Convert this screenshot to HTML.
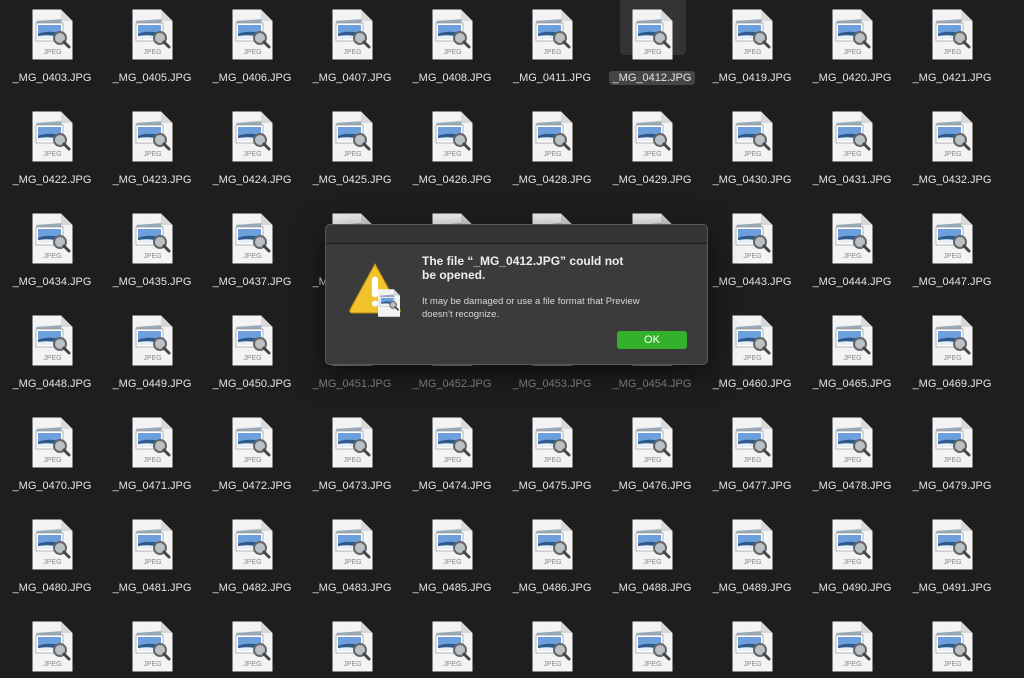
<!DOCTYPE html>
<html><head><meta charset="utf-8"><style>
html,body{margin:0;width:1024px;height:678px;overflow:hidden}
body{background:#1e1e1e;font-family:"Liberation Sans",sans-serif;position:relative}
.c{position:absolute;width:100px;height:102px}
.lr{height:66px}
.c svg{position:absolute;left:32px;top:9px}
.j{position:absolute;left:32px;width:41px;top:49px;text-align:center;font-size:7px;color:#8a8a8a}
.l{position:absolute;left:0;width:104px;top:72px;text-align:center;font-size:11px;color:#e4e4e4;white-space:nowrap}
.d .l{color:#8a8a8a}
.sel .bg{position:absolute;left:20px;top:-5px;width:66px;height:60px;background:#333;border-radius:4px}
.sel .l span{background:#454545;padding:1px 4px;border-radius:3px}
#dlg{position:absolute;left:325px;top:224px;width:381px;height:139px;background:#3b3b3b;border:1px solid #5a5a5a;border-radius:5px;box-shadow:0 8px 30px rgba(0,0,0,.6);overflow:hidden}
#dlg .tb{height:18px;background:#353535;border-bottom:1px solid #1a1a1a}
#dlg .t{position:absolute;left:96px;top:29px;font-size:12px;font-weight:bold;color:#eee;line-height:14px;width:208px}
#dlg .b{position:absolute;left:96px;top:70px;font-size:9.5px;color:#d8d8d8;line-height:13px;width:240px}
#dlg .ok{position:absolute;left:291px;top:106px;width:70px;height:18px;background:#34b12c;border-radius:3px;color:#fff;font-size:11px;text-align:center;line-height:18px}
</style></head><body>
<svg width="0" height="0" style="position:absolute"><defs>
<symbol id="ic" viewBox="0 0 41 51">
<path d="M0.5 0.5H29L40.5 12V50.5H0.5Z" fill="#f3f3f3"/>
<path d="M29 0.5V12H40.5Z" fill="#d8d8d8"/>
<rect x="5" y="11" width="25" height="18" fill="#9ab" transform="rotate(-4 17 20)"/>
<rect x="4" y="14" width="27" height="18" fill="#fff" stroke="#888" stroke-width=".6"/>
<rect x="6" y="16" width="23" height="14" fill="#6d9fdc"/>
<path d="M6 25Q14 21 29 24V30H6Z" fill="#2d5a8a"/>
<path d="M6 27Q16 25 29 28V30H6Z" fill="#e8eef5"/>
<circle cx="28" cy="29" r="6" fill="#b9c0c6" stroke="#666" stroke-width="2"/>
<path d="M32 33L37 38" stroke="#444" stroke-width="3" stroke-linecap="round"/>
</symbol>
<symbol id="warn" viewBox="0 0 52 52">
<path d="M26 2L50 46Q51 49 47 49H5Q1 49 2 46Z" fill="#f2c22a" stroke="#c99a10" stroke-width="1"/>
<rect x="23" y="14" width="6" height="20" rx="3" fill="#fff"/>
<circle cx="26" cy="40" r="3" fill="#fff"/>
</symbol>
</defs></svg>

<div class="c" style="left:0;top:0"><svg width="41" height="51"><use href="#ic"/></svg><div class="j">JPEG</div><div class="l">_MG_0403.JPG</div></div>
<div class="c" style="left:100px;top:0"><svg width="41" height="51"><use href="#ic"/></svg><div class="j">JPEG</div><div class="l">_MG_0405.JPG</div></div>
<div class="c" style="left:200px;top:0"><svg width="41" height="51"><use href="#ic"/></svg><div class="j">JPEG</div><div class="l">_MG_0406.JPG</div></div>
<div class="c" style="left:300px;top:0"><svg width="41" height="51"><use href="#ic"/></svg><div class="j">JPEG</div><div class="l">_MG_0407.JPG</div></div>
<div class="c" style="left:400px;top:0"><svg width="41" height="51"><use href="#ic"/></svg><div class="j">JPEG</div><div class="l">_MG_0408.JPG</div></div>
<div class="c" style="left:500px;top:0"><svg width="41" height="51"><use href="#ic"/></svg><div class="j">JPEG</div><div class="l">_MG_0411.JPG</div></div>
<div class="c sel" style="left:600px;top:0"><div class="bg"></div><svg width="41" height="51"><use href="#ic"/></svg><div class="j">JPEG</div><div class="l"><span>_MG_0412.JPG</span></div></div>
<div class="c" style="left:700px;top:0"><svg width="41" height="51"><use href="#ic"/></svg><div class="j">JPEG</div><div class="l">_MG_0419.JPG</div></div>
<div class="c" style="left:800px;top:0"><svg width="41" height="51"><use href="#ic"/></svg><div class="j">JPEG</div><div class="l">_MG_0420.JPG</div></div>
<div class="c" style="left:900px;top:0"><svg width="41" height="51"><use href="#ic"/></svg><div class="j">JPEG</div><div class="l">_MG_0421.JPG</div></div>

<div class="c" style="left:0;top:102px"><svg width="41" height="51"><use href="#ic"/></svg><div class="j">JPEG</div><div class="l">_MG_0422.JPG</div></div>
<div class="c" style="left:100px;top:102px"><svg width="41" height="51"><use href="#ic"/></svg><div class="j">JPEG</div><div class="l">_MG_0423.JPG</div></div>
<div class="c" style="left:200px;top:102px"><svg width="41" height="51"><use href="#ic"/></svg><div class="j">JPEG</div><div class="l">_MG_0424.JPG</div></div>
<div class="c" style="left:300px;top:102px"><svg width="41" height="51"><use href="#ic"/></svg><div class="j">JPEG</div><div class="l">_MG_0425.JPG</div></div>
<div class="c" style="left:400px;top:102px"><svg width="41" height="51"><use href="#ic"/></svg><div class="j">JPEG</div><div class="l">_MG_0426.JPG</div></div>
<div class="c" style="left:500px;top:102px"><svg width="41" height="51"><use href="#ic"/></svg><div class="j">JPEG</div><div class="l">_MG_0428.JPG</div></div>
<div class="c" style="left:600px;top:102px"><svg width="41" height="51"><use href="#ic"/></svg><div class="j">JPEG</div><div class="l">_MG_0429.JPG</div></div>
<div class="c" style="left:700px;top:102px"><svg width="41" height="51"><use href="#ic"/></svg><div class="j">JPEG</div><div class="l">_MG_0430.JPG</div></div>
<div class="c" style="left:800px;top:102px"><svg width="41" height="51"><use href="#ic"/></svg><div class="j">JPEG</div><div class="l">_MG_0431.JPG</div></div>
<div class="c" style="left:900px;top:102px"><svg width="41" height="51"><use href="#ic"/></svg><div class="j">JPEG</div><div class="l">_MG_0432.JPG</div></div>

<div class="c" style="left:0;top:204px"><svg width="41" height="51"><use href="#ic"/></svg><div class="j">JPEG</div><div class="l">_MG_0434.JPG</div></div>
<div class="c" style="left:100px;top:204px"><svg width="41" height="51"><use href="#ic"/></svg><div class="j">JPEG</div><div class="l">_MG_0435.JPG</div></div>
<div class="c" style="left:200px;top:204px"><svg width="41" height="51"><use href="#ic"/></svg><div class="j">JPEG</div><div class="l">_MG_0437.JPG</div></div>
<div class="c" style="left:300px;top:204px"><svg width="41" height="51"><use href="#ic"/></svg><div class="j">JPEG</div><div class="l">_MG_0438.JPG</div></div>
<div class="c" style="left:400px;top:204px"><svg width="41" height="51"><use href="#ic"/></svg><div class="j">JPEG</div><div class="l">_MG_0439.JPG</div></div>
<div class="c" style="left:500px;top:204px"><svg width="41" height="51"><use href="#ic"/></svg><div class="j">JPEG</div><div class="l">_MG_0440.JPG</div></div>
<div class="c" style="left:600px;top:204px"><svg width="41" height="51"><use href="#ic"/></svg><div class="j">JPEG</div><div class="l">_MG_0441.JPG</div></div>
<div class="c" style="left:700px;top:204px"><svg width="41" height="51"><use href="#ic"/></svg><div class="j">JPEG</div><div class="l">_MG_0443.JPG</div></div>
<div class="c" style="left:800px;top:204px"><svg width="41" height="51"><use href="#ic"/></svg><div class="j">JPEG</div><div class="l">_MG_0444.JPG</div></div>
<div class="c" style="left:900px;top:204px"><svg width="41" height="51"><use href="#ic"/></svg><div class="j">JPEG</div><div class="l">_MG_0447.JPG</div></div>

<div class="c" style="left:0;top:306px"><svg width="41" height="51"><use href="#ic"/></svg><div class="j">JPEG</div><div class="l">_MG_0448.JPG</div></div>
<div class="c" style="left:100px;top:306px"><svg width="41" height="51"><use href="#ic"/></svg><div class="j">JPEG</div><div class="l">_MG_0449.JPG</div></div>
<div class="c" style="left:200px;top:306px"><svg width="41" height="51"><use href="#ic"/></svg><div class="j">JPEG</div><div class="l">_MG_0450.JPG</div></div>
<div class="c d" style="left:300px;top:306px"><svg width="41" height="51"><use href="#ic"/></svg><div class="j">JPEG</div><div class="l">_MG_0451.JPG</div></div>
<div class="c d" style="left:400px;top:306px"><svg width="41" height="51"><use href="#ic"/></svg><div class="j">JPEG</div><div class="l">_MG_0452.JPG</div></div>
<div class="c d" style="left:500px;top:306px"><svg width="41" height="51"><use href="#ic"/></svg><div class="j">JPEG</div><div class="l">_MG_0453.JPG</div></div>
<div class="c d" style="left:600px;top:306px"><svg width="41" height="51"><use href="#ic"/></svg><div class="j">JPEG</div><div class="l">_MG_0454.JPG</div></div>
<div class="c" style="left:700px;top:306px"><svg width="41" height="51"><use href="#ic"/></svg><div class="j">JPEG</div><div class="l">_MG_0460.JPG</div></div>
<div class="c" style="left:800px;top:306px"><svg width="41" height="51"><use href="#ic"/></svg><div class="j">JPEG</div><div class="l">_MG_0465.JPG</div></div>
<div class="c" style="left:900px;top:306px"><svg width="41" height="51"><use href="#ic"/></svg><div class="j">JPEG</div><div class="l">_MG_0469.JPG</div></div>

<div class="c" style="left:0;top:408px"><svg width="41" height="51"><use href="#ic"/></svg><div class="j">JPEG</div><div class="l">_MG_0470.JPG</div></div>
<div class="c" style="left:100px;top:408px"><svg width="41" height="51"><use href="#ic"/></svg><div class="j">JPEG</div><div class="l">_MG_0471.JPG</div></div>
<div class="c" style="left:200px;top:408px"><svg width="41" height="51"><use href="#ic"/></svg><div class="j">JPEG</div><div class="l">_MG_0472.JPG</div></div>
<div class="c" style="left:300px;top:408px"><svg width="41" height="51"><use href="#ic"/></svg><div class="j">JPEG</div><div class="l">_MG_0473.JPG</div></div>
<div class="c" style="left:400px;top:408px"><svg width="41" height="51"><use href="#ic"/></svg><div class="j">JPEG</div><div class="l">_MG_0474.JPG</div></div>
<div class="c" style="left:500px;top:408px"><svg width="41" height="51"><use href="#ic"/></svg><div class="j">JPEG</div><div class="l">_MG_0475.JPG</div></div>
<div class="c" style="left:600px;top:408px"><svg width="41" height="51"><use href="#ic"/></svg><div class="j">JPEG</div><div class="l">_MG_0476.JPG</div></div>
<div class="c" style="left:700px;top:408px"><svg width="41" height="51"><use href="#ic"/></svg><div class="j">JPEG</div><div class="l">_MG_0477.JPG</div></div>
<div class="c" style="left:800px;top:408px"><svg width="41" height="51"><use href="#ic"/></svg><div class="j">JPEG</div><div class="l">_MG_0478.JPG</div></div>
<div class="c" style="left:900px;top:408px"><svg width="41" height="51"><use href="#ic"/></svg><div class="j">JPEG</div><div class="l">_MG_0479.JPG</div></div>

<div class="c" style="left:0;top:510px"><svg width="41" height="51"><use href="#ic"/></svg><div class="j">JPEG</div><div class="l">_MG_0480.JPG</div></div>
<div class="c" style="left:100px;top:510px"><svg width="41" height="51"><use href="#ic"/></svg><div class="j">JPEG</div><div class="l">_MG_0481.JPG</div></div>
<div class="c" style="left:200px;top:510px"><svg width="41" height="51"><use href="#ic"/></svg><div class="j">JPEG</div><div class="l">_MG_0482.JPG</div></div>
<div class="c" style="left:300px;top:510px"><svg width="41" height="51"><use href="#ic"/></svg><div class="j">JPEG</div><div class="l">_MG_0483.JPG</div></div>
<div class="c" style="left:400px;top:510px"><svg width="41" height="51"><use href="#ic"/></svg><div class="j">JPEG</div><div class="l">_MG_0485.JPG</div></div>
<div class="c" style="left:500px;top:510px"><svg width="41" height="51"><use href="#ic"/></svg><div class="j">JPEG</div><div class="l">_MG_0486.JPG</div></div>
<div class="c" style="left:600px;top:510px"><svg width="41" height="51"><use href="#ic"/></svg><div class="j">JPEG</div><div class="l">_MG_0488.JPG</div></div>
<div class="c" style="left:700px;top:510px"><svg width="41" height="51"><use href="#ic"/></svg><div class="j">JPEG</div><div class="l">_MG_0489.JPG</div></div>
<div class="c" style="left:800px;top:510px"><svg width="41" height="51"><use href="#ic"/></svg><div class="j">JPEG</div><div class="l">_MG_0490.JPG</div></div>
<div class="c" style="left:900px;top:510px"><svg width="41" height="51"><use href="#ic"/></svg><div class="j">JPEG</div><div class="l">_MG_0491.JPG</div></div>

<div class="c lr" style="left:0;top:612px"><svg width="41" height="51"><use href="#ic"/></svg><div class="j">JPEG</div></div>
<div class="c lr" style="left:100px;top:612px"><svg width="41" height="51"><use href="#ic"/></svg><div class="j">JPEG</div></div>
<div class="c lr" style="left:200px;top:612px"><svg width="41" height="51"><use href="#ic"/></svg><div class="j">JPEG</div></div>
<div class="c lr" style="left:300px;top:612px"><svg width="41" height="51"><use href="#ic"/></svg><div class="j">JPEG</div></div>
<div class="c lr" style="left:400px;top:612px"><svg width="41" height="51"><use href="#ic"/></svg><div class="j">JPEG</div></div>
<div class="c lr" style="left:500px;top:612px"><svg width="41" height="51"><use href="#ic"/></svg><div class="j">JPEG</div></div>
<div class="c lr" style="left:600px;top:612px"><svg width="41" height="51"><use href="#ic"/></svg><div class="j">JPEG</div></div>
<div class="c lr" style="left:700px;top:612px"><svg width="41" height="51"><use href="#ic"/></svg><div class="j">JPEG</div></div>
<div class="c lr" style="left:800px;top:612px"><svg width="41" height="51"><use href="#ic"/></svg><div class="j">JPEG</div></div>
<div class="c lr" style="left:900px;top:612px"><svg width="41" height="51"><use href="#ic"/></svg><div class="j">JPEG</div></div>

<div id="dlg"><div class="tb"></div>
<svg style="position:absolute;left:22px;top:37px" width="54" height="54"><use href="#warn"/></svg>
<svg style="position:absolute;left:50px;top:64px" width="26" height="28" viewBox="0 0 41 51"><use href="#ic"/></svg>
<div class="t">The file “_MG_0412.JPG” could not be opened.</div>
<div class="b">It may be damaged or use a file format that Preview doesn’t recognize.</div>
<div class="ok">OK</div>
</div>
</body></html>
